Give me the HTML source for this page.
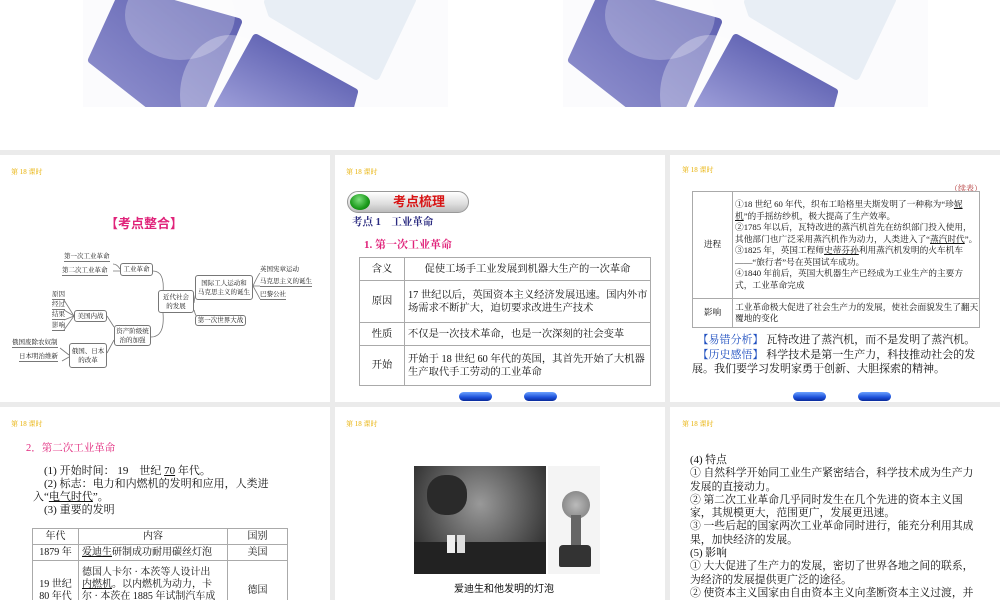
<!DOCTYPE html>
<html><head><meta charset="utf-8">
<style>
*{margin:0;padding:0;box-sizing:border-box}
body{width:1000px;height:600px;overflow:hidden;background:#fff;position:relative;font-family:"Liberation Serif","Noto Serif CJK SC",serif;color:#111}
.a{position:absolute;white-space:nowrap}
.gray{position:absolute;left:0;top:150px;width:1000px;height:450px;background:#ebebeb}
.sl{position:absolute;background:#fff;overflow:hidden}
.hd{position:absolute;left:11px;top:12px;font-size:7px;color:#e8b000}
table{border-collapse:collapse;position:absolute}
td{border:1px solid #aaa;vertical-align:middle}
.btn{position:absolute;width:33px;height:9px;border-radius:5px;background:linear-gradient(#6aa0ff,#1b4fd8 60%,#0a2a9a);}
u{text-decoration:underline}
.box{position:absolute;border:1px solid #777;border-radius:3px;font-size:6.5px;text-align:center;line-height:9px;display:flex;align-items:center;justify-content:center;background:#fff}
.mt{position:absolute;font-size:6.5px;border-bottom:1px solid #777;line-height:9px;white-space:nowrap}
</style></head><body>

<svg class="a" style="left:0;top:0" width="1000" height="107">
 <defs>
  <linearGradient id="g1" x1="0" y1="1" x2="1" y2="0"><stop offset="0" stop-color="#9192cf"/><stop offset="1" stop-color="#5a5cae"/></linearGradient>
  <linearGradient id="g2" x1="0" y1="1" x2="1" y2="0"><stop offset="0" stop-color="#9c9dd8"/><stop offset="1" stop-color="#4a4da5"/></linearGradient>
 </defs>
 <g id="art">
  <rect x="83" y="0" width="365" height="107" fill="#fbfbfd"/>
  <polygon points="268,2 272,14 376,76 412,0" fill="#e8eef5" stroke="#e8eef5" stroke-width="8" stroke-linejoin="round"/>
  <polygon points="92,60 124,-10 238,22 202,107 152,107" fill="url(#g1)" stroke="url(#g1)" stroke-width="8" stroke-linejoin="round"/>
  <ellipse cx="180" cy="15" rx="55" ry="45" fill="#fff" opacity="0.25"/>
  <ellipse cx="230" cy="95" rx="50" ry="60" fill="#fff" opacity="0.3"/>
  <polygon points="256,38 354,92 350,107 218,107" fill="url(#g2)" stroke="url(#g2)" stroke-width="8" stroke-linejoin="round"/>
  <rect x="83" y="107" width="365" height="10" fill="#fff"/>
  <rect x="448" y="0" width="20" height="107" fill="#fff"/>
 </g>
 <use href="#art" x="480"/>
</svg>

<div class="gray"></div>

<!-- slide 1 -->
<div class="sl" style="left:0;top:155px;width:330px;height:247px">
 <div class="hd">第 18 课时</div>
 <div class="a" style="left:105px;top:58px;font-size:13px;font-weight:bold;color:#e0237a;font-family:'Liberation Sans','Noto Sans CJK SC',sans-serif">【考点整合】</div>
 <svg class="a" style="left:0;top:0" width="330" height="247"><g fill="none" stroke="#777" stroke-width="0.8">
  <path d="M113 109 Q117 109 120 114 M113 116 L120 116"/>
  <path d="M153 116 Q165 116 163 138 M151 182 Q165 182 163 158"/>
  <path d="M194 148 Q196 130 203 129 M194 155 Q196 163 200 165"/>
  <path d="M253 131 L260 131 M253 131 Q258 120 260 118 M253 131 Q258 140 260 144"/>
  <path d="M107 161 L114 172 M107 198 L114 185"/>
  <path d="M64 145 L74 161 M64 155 L74 161 M64 165 L74 161 M64 175 L74 161"/>
  <path d="M60 193 L69 200 M62 206 L69 202"/>
 </g></svg>
 <div class="mt" style="left:64px;top:97px">第一次工业革命</div>
 <div class="mt" style="left:62px;top:111px">第二次工业革命</div>
 <div class="box" style="left:120px;top:108px;width:33px;height:13px">工业革命</div>
 <div class="mt" style="left:52px;top:135px">原因</div>
 <div class="mt" style="left:52px;top:145px">经过</div>
 <div class="mt" style="left:52px;top:155px">结果</div>
 <div class="mt" style="left:52px;top:166px">影响</div>
 <div class="box" style="left:74px;top:155px;width:33px;height:12px">美国内战</div>
 <div class="mt" style="left:12px;top:183px">俄国废除农奴制</div>
 <div class="mt" style="left:19px;top:197px">日本明治维新</div>
 <div class="box" style="left:69px;top:188px;width:38px;height:25px">俄国、日本<br>的改革</div>
 <div class="box" style="left:114px;top:170px;width:37px;height:21px">资产阶级统<br>治的加强</div>
 <div class="box" style="left:158px;top:135px;width:36px;height:23px">近代社会<br>的发展</div>
 <div class="box" style="left:195px;top:120px;width:58px;height:25px">国际工人运动和<br>马克思主义的诞生</div>
 <div class="box" style="left:195px;top:160px;width:51px;height:11px">第一次世界大战</div>
 <div class="mt" style="left:260px;top:110px;border:none">英国宪章运动</div>
 <div class="mt" style="left:260px;top:122px">马克思主义的诞生</div>
 <div class="mt" style="left:260px;top:135px">巴黎公社</div>
</div>

<!-- slide 2 -->
<div class="sl" style="left:335px;top:155px;width:330px;height:247px">
 <div class="hd">第 18 课时</div>
 <div class="a" style="left:12px;top:36px;width:122px;height:22px;border-radius:11px;border:1px solid #999;background:linear-gradient(#fff,#ddd 60%,#bbb)"></div>
 <div class="a" style="left:15px;top:39px;width:20px;height:16px;border-radius:50%;background:radial-gradient(circle at 45% 35%,#7ee07e,#1a9a1a 60%,#0a6a0a)"></div>
 <div class="a" style="left:58px;top:36px;font-size:13px;font-weight:bold;color:#d81414;font-family:'Liberation Sans','Noto Sans CJK SC',sans-serif;line-height:22px">考点梳理</div>
 <div class="a" style="left:17px;top:59px;font-size:10.5px;color:#2a2a80;font-weight:bold">考点 1　工业革命</div>
 <div class="a" style="left:29px;top:81px;font-size:11px;color:#e0237a;font-weight:bold">1. 第一次工业革命</div>
 <table style="left:24px;top:102px;width:292px;font-size:10.3px;line-height:13px">
  <tr style="height:23px"><td style="width:45px;text-align:center">含义</td><td style="text-align:center">促使工场手工业发展到机器大生产的一次革命</td></tr>
  <tr style="height:42px"><td style="text-align:center">原因</td><td style="padding-left:3px">17 世纪以后，英国资本主义经济发展迅速。国内外市场需求不断扩大，迫切要求改进生产技术</td></tr>
  <tr style="height:23px"><td style="text-align:center">性质</td><td style="padding-left:3px">不仅是一次技术革命，也是一次深刻的社会变革</td></tr>
  <tr style="height:40px"><td style="text-align:center">开始</td><td style="padding-left:3px">开始于 18 世纪 60 年代的英国，其首先开始了大机器生产取代手工劳动的工业革命</td></tr>
 </table>
 <div class="btn" style="left:124px;top:237px"></div>
 <div class="btn" style="left:189px;top:237px"></div>
</div>

<!-- slide 3 -->
<div class="sl" style="left:670px;top:155px;width:330px;height:247px">
 <div class="hd" style="left:12px;top:10px">第 18 课时</div>
 <div class="a" style="left:280px;top:28px;font-size:8px;color:#b03030">（续表）</div>
 <table style="left:22px;top:36px;width:288px;font-size:8.7px;line-height:11.5px">
  <tr style="height:107px"><td style="width:40px;text-align:center">进程</td><td style="padding-left:2px">①18 世纪 60 年代，织布工哈格里夫斯发明了一种称为“珍<u>妮机</u>”的手摇纺纱机，极大提高了生产效率。<br>②1785 年以后，瓦特改进的蒸汽机首先在纺织部门投入使用，其他部门也广泛采用蒸汽机作为动力，人类进入了“<u>蒸汽时代</u>”。<br>③1825 年，英国工程师<u>史蒂芬孙</u>利用蒸汽机发明的火车机车——“旅行者”号在英国试车成功。<br>④1840 年前后，英国大机器生产已经成为工业生产的主要方式，工业革命完成</td></tr>
  <tr style="height:29px"><td style="text-align:center">影响</td><td style="padding-left:2px">工业革命极大促进了社会生产力的发展，使社会面貌发生了翻天覆地的变化</td></tr>
 </table>
 <div class="a" style="left:22px;top:178px;font-size:11px;line-height:14.5px;white-space:normal;width:300px">　<span style="color:#2050c0">【易错分析】</span> 瓦特改进了蒸汽机，而不是发明了蒸汽机。<br>　<span style="color:#2050c0">【历史感悟】</span> 科学技术是第一生产力，科技推动社会的发展。我们要学习发明家勇于创新、大胆探索的精神。</div>
 <div class="btn" style="left:123px;top:237px"></div>
 <div class="btn" style="left:188px;top:237px"></div>
</div>

<!-- slide 4 -->
<div class="sl" style="left:0;top:407px;width:330px;height:193px">
 <div class="hd">第 18 课时</div>
 <div class="a" style="left:26px;top:33px;font-size:10.5px;color:#e0237a">2．第二次工业革命</div>
 <div class="a" style="left:33px;top:58px;font-size:11px;line-height:13px;white-space:normal;width:245px">　(1) 开始时间： 19　世纪 <u>70</u> 年代。<br>　(2) 标志：电力和内燃机的发明和应用，人类进入“<u>电气时代</u>”。<br>　(3) 重要的发明</div>
 <table style="left:32px;top:121px;width:256px;font-size:10px;line-height:12px;text-align:center">
  <tr style="height:16px"><td style="width:46px">年代</td><td>内容</td><td style="width:60px">国别</td></tr>
  <tr style="height:16px"><td>1879 年</td><td style="text-align:left;padding-left:3px"><u>爱迪生</u>研制成功耐用碳丝灯泡</td><td>美国</td></tr>
  <tr style="height:60px"><td>19 世纪<br>80 年代</td><td style="text-align:left;padding-left:3px;padding-right:8px">德国人卡尔 · 本茨等人设计出<u>内燃机</u>。以内燃机为动力，卡尔 · 本茨在 1885 年试制汽车成功</td><td>德国</td></tr>
 </table>
</div>

<!-- slide 5 -->
<div class="sl" style="left:335px;top:407px;width:330px;height:193px">
 <div class="hd">第 18 课时</div>
 <div class="a" style="left:79px;top:59px;width:132px;height:108px;background:radial-gradient(ellipse at 50% 35%,#999,#666 40%,#333 80%)"></div>
 <div class="a" style="left:92px;top:68px;width:40px;height:40px;border-radius:45%;background:#2a2a2a"></div>
 <div class="a" style="left:79px;top:135px;width:132px;height:32px;background:#222"></div>
 <div class="a" style="left:112px;top:128px;width:8px;height:18px;background:#eee"></div>
 <div class="a" style="left:122px;top:128px;width:8px;height:18px;background:#ddd"></div>
 <div class="a" style="left:213px;top:59px;width:52px;height:108px;background:#f4f4f4"></div>
 <div class="a" style="left:227px;top:84px;width:28px;height:28px;border-radius:50%;background:radial-gradient(#bbb,#777)"></div>
 <div class="a" style="left:236px;top:108px;width:10px;height:30px;background:#666"></div>
 <div class="a" style="left:224px;top:138px;width:32px;height:22px;border-radius:4px 4px 2px 2px;background:#333"></div>
 <div class="a" style="left:119px;top:173px;font-size:10px;font-family:'Liberation Sans','Noto Sans CJK SC',sans-serif">爱迪生和他发明的灯泡</div>
</div>

<!-- slide 6 -->
<div class="sl" style="left:670px;top:407px;width:330px;height:193px">
 <div class="hd" style="left:12px">第 18 课时</div>
 <div class="a" style="left:20px;top:47px;font-size:10.8px;line-height:13.3px;white-space:normal;width:292px">(4) 特点<br>① 自然科学开始同工业生产紧密结合，科学技术成为生产力发展的直接动力。<br>② 第二次工业革命几乎同时发生在几个先进的资本主义国家，其规模更大，范围更广，发展更迅速。<br>③ 一些后起的国家两次工业革命同时进行，能充分利用其成果，加快经济的发展。<br>(5) 影响<br>① 大大促进了生产力的发展，密切了世界各地之间的联系，为经济的发展提供更广泛的途径。<br>② 使资本主义国家由自由资本主义向垄断资本主义过渡，并</div>
</div>
</body></html>
